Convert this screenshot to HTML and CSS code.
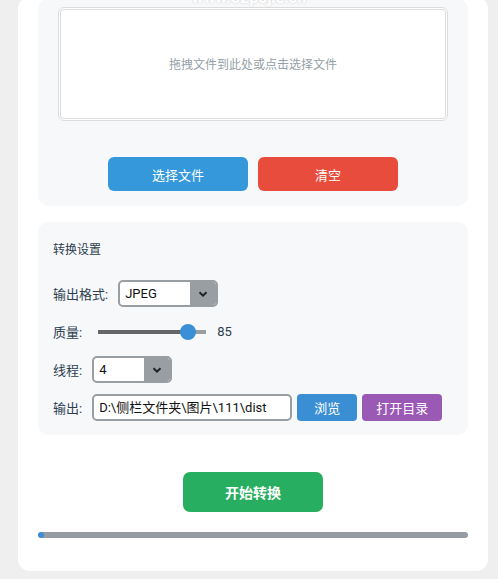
FILE: index.html
```html
<!DOCTYPE html>
<html lang="zh">
<head>
<meta charset="utf-8">
<link rel="stylesheet" href="styles.css">
</head>
<body>
<div class="watermark">www.52pojie.cn</div>
<main class="card">
  <section class="panel upload">
    <div class="dropzone">拖拽文件到此处或点击选择文件</div>
    <div class="btn-row">
      <button class="btn btn-blue">选择文件</button>
      <button class="btn btn-red">清空</button>
    </div>
  </section>

  <section class="panel settings">
    <h3 class="title">转换设置</h3>
    <div class="row">
      <span class="label">输出格式:</span>
      <div class="select sel-format">
        <span class="sel-value">JPEG</span>
        <span class="sel-arrow"><svg width="10" height="6" viewBox="0 0 10 6"><path d="M1.5 1.2 5 4.6 8.5 1.2" fill="none" stroke="#222" stroke-width="2"/></svg></span>
      </div>
    </div>
    <div class="row">
      <span class="label">质量:</span>
      <div class="slider">
        <div class="slider-fill"></div>
        <div class="slider-thumb"></div>
      </div>
      <span class="value">85</span>
    </div>
    <div class="row">
      <span class="label">线程:</span>
      <div class="select sel-thread">
        <span class="sel-value">4</span>
        <span class="sel-arrow"><svg width="10" height="6" viewBox="0 0 10 6"><path d="M1.5 1.2 5 4.6 8.5 1.2" fill="none" stroke="#222" stroke-width="2"/></svg></span>
      </div>
    </div>
    <div class="row">
      <span class="label">输出:</span>
      <div class="input">D:\侧栏文件夹\图片\111\dist</div>
      <button class="btn-sm btn-browse">浏览</button>
      <button class="btn-sm btn-purple">打开目录</button>
    </div>
  </section>

  <div class="start-row">
    <button class="btn-start">开始转换</button>
  </div>

  <div class="progress"><div class="progress-fill"></div></div>
</main>
</body>
</html>
```

FILE: styles.css
```css
* { box-sizing: border-box; }
html, body { margin: 0; padding: 0; }
body {
  background: #efefef;
  font-family: Roboto, "Noto Sans CJK SC", sans-serif;
  color: #2c3e50;
  width: 498px;
  height: 579px;
  overflow: hidden;
  position: relative;
}
.watermark {
  position: absolute;
  left: 0;
  right: 0;
  top: -12px;
  text-align: center;
  font-size: 16px;
  font-weight: bold;
  color: #fff;
  text-shadow: 0 0 2px #c8c8c8;
  z-index: 5;
}
.card {
  margin: -3px 0 0 18px;
  width: 470px;
  height: 574px;
  background: #fff;
  border-radius: 12px;
  padding: 2px 20px 0;
  display: flex;
  flex-direction: column;
}
.panel {
  background: #f7f8fa;
  border-radius: 10px;
}
.upload {
  padding: 8px 20px 15px;
}
.dropzone {
  height: 114px;
  background: #fff;
  border: 3px double #dcdcdc;
  border-radius: 6px;
  display: flex;
  align-items: center;
  justify-content: center;
  font-size: 12px;
  color: #95a0a6;
  padding-bottom: 1px;
}
.btn-row {
  margin-top: 36px;
  display: flex;
  justify-content: center;
  gap: 10px;
}
.btn {
  width: 140px;
  height: 34px;
  border: none;
  border-radius: 6px;
  color: #fff;
  font-family: Roboto, "Noto Sans CJK SC", sans-serif;
  font-size: 13px;
  padding: 0;
}
.btn-blue { background: #3498db; }
.btn-red { background: #e74c3c; }

.settings {
  margin-top: 16px;
  padding: 20px 15px 14px;
}
.title {
  margin: 0 0 22px;
  font-size: 12px;
  font-weight: normal;
  line-height: 16px;
  color: #2c3e50;
}
.row {
  display: flex;
  align-items: center;
  height: 27px;
  margin-bottom: 11px;
  font-size: 13px;
}
.row:last-child { margin-bottom: 0; }
.label {
  margin-right: 10px;
  white-space: nowrap;
}
.select {
  height: 27px;
  border: 2px solid #999ea3;
  border-radius: 5px;
  background: #fff;
  display: flex;
  overflow: hidden;
}
.sel-format { width: 100px; }
.sel-thread { width: 80px; }
.sel-value {
  flex: 1;
  padding-left: 5px;
  line-height: 23px;
  color: #111;
}
.sel-arrow {
  width: 26px;
  background: #999ea3;
  display: flex;
  align-items: center;
  justify-content: center;
}
.slider {
  position: relative;
  width: 108px;
  height: 4px;
  margin-left: 6px;
  background: #999ea3;
}
.slider-fill {
  width: 90px;
  height: 4px;
  background: #666;
}
.slider-thumb {
  position: absolute;
  left: 82px;
  top: -6px;
  width: 16px;
  height: 16px;
  border-radius: 50%;
  background: #3a8fd6;
}
.value {
  margin-left: 11px;
  color: #2c3e50;
}
.input {
  width: 200px;
  height: 27px;
  border: 2px solid #999ea3;
  border-radius: 5px;
  background: #fff;
  padding-left: 5px;
  line-height: 23px;
  color: #111;
  white-space: nowrap;
}
.btn-sm {
  height: 27px;
  margin-left: 5px;
  border: none;
  border-radius: 4px;
  color: #fff;
  font-family: Roboto, "Noto Sans CJK SC", sans-serif;
  font-size: 13px;
  padding: 0;
}
.btn-browse { width: 60px; background: #3a8fd4; }
.btn-purple { width: 80px; background: #9b59b6; }

.start-row {
  margin-top: 37px;
  display: flex;
  justify-content: center;
}
.btn-start {
  width: 140px;
  height: 40px;
  border: none;
  border-radius: 7px;
  background: #27ae60;
  color: #fff;
  font-family: Roboto, "Noto Sans CJK SC", sans-serif;
  font-size: 14px;
  font-weight: bold;
  padding: 0;
}
.progress {
  margin-top: 20px;
  height: 6px;
  border-radius: 3px;
  background: #959ca3;
  overflow: hidden;
}
.progress-fill {
  width: 6px;
  height: 6px;
  border-radius: 3px;
  background: #3a8fd6;
}
```
